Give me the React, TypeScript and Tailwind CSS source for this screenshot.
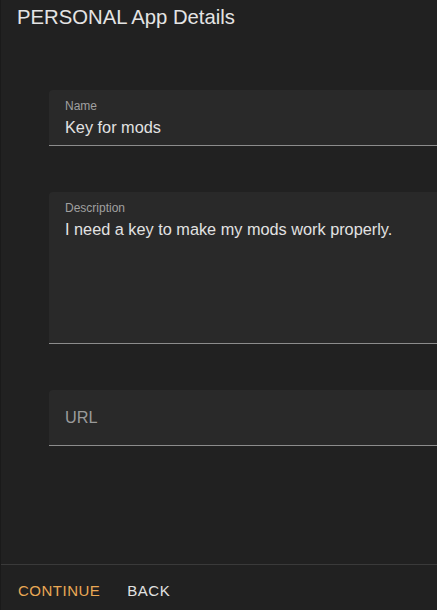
import React from 'react';

type FieldProps = {
  label?: string;
  value?: string;
  placeholder?: string;
  tall?: boolean;
};

const Field = ({ label, value, placeholder, tall }: FieldProps) => {
  if (placeholder) {
    return (
      <div className="flex h-[56px] w-[420px] items-center rounded-t-[4px] border-b border-[#8c8c8c] bg-[#292929] px-4">
        <span className="text-[16.3px] text-[#9a9a9a]">{placeholder}</span>
      </div>
    );
  }
  return (
    <div
      className={
        tall
          ? 'h-[152px] w-[420px] rounded-t-[4px] border-b border-[#8c8c8c] bg-[#292929] px-4 pt-[8px]'
          : 'h-[56px] w-[420px] rounded-t-[4px] border-b border-[#8c8c8c] bg-[#292929] px-4 pt-[8px]'
      }>
      <p className="text-[12px] leading-[16px] text-[#a0a0a0]">{label}</p>
      <p className="mt-[3px] text-[16.3px] leading-[20px] text-[#e2e2e2]">{value}</p>
    </div>
  );
};

const App = () => {
  return (
    <div
      className="flex h-[610px] w-[437px] flex-col overflow-hidden border-l border-[#1a1a1a] bg-[#212121]"
      style={{ fontFamily: '"Liberation Sans", Arial, sans-serif' }}>
      <div className="flex-1">
        <h1 className="pl-4 pt-[5px] text-[20.3px] leading-[25px] text-[#e4e4e4]">PERSONAL App Details</h1>
        <div className="ml-[48px] mt-[60px] flex flex-col gap-[46px]">
          <Field label="Name" value="Key for mods" />
          <Field label="Description" value="I need a key to make my mods work properly." tall />
          <Field placeholder="URL" />
        </div>
      </div>
      <div className="flex h-[46px] items-center gap-[27px] border-t border-[#3a3a3a] pl-[17px] pt-[8px]">
        <button className="text-[15px] tracking-[0.5px] text-[#eaa855]">CONTINUE</button>
        <button className="text-[15px] tracking-[0.5px] text-[#e2e2e2]">BACK</button>
      </div>
    </div>
  );
};

export default App;
